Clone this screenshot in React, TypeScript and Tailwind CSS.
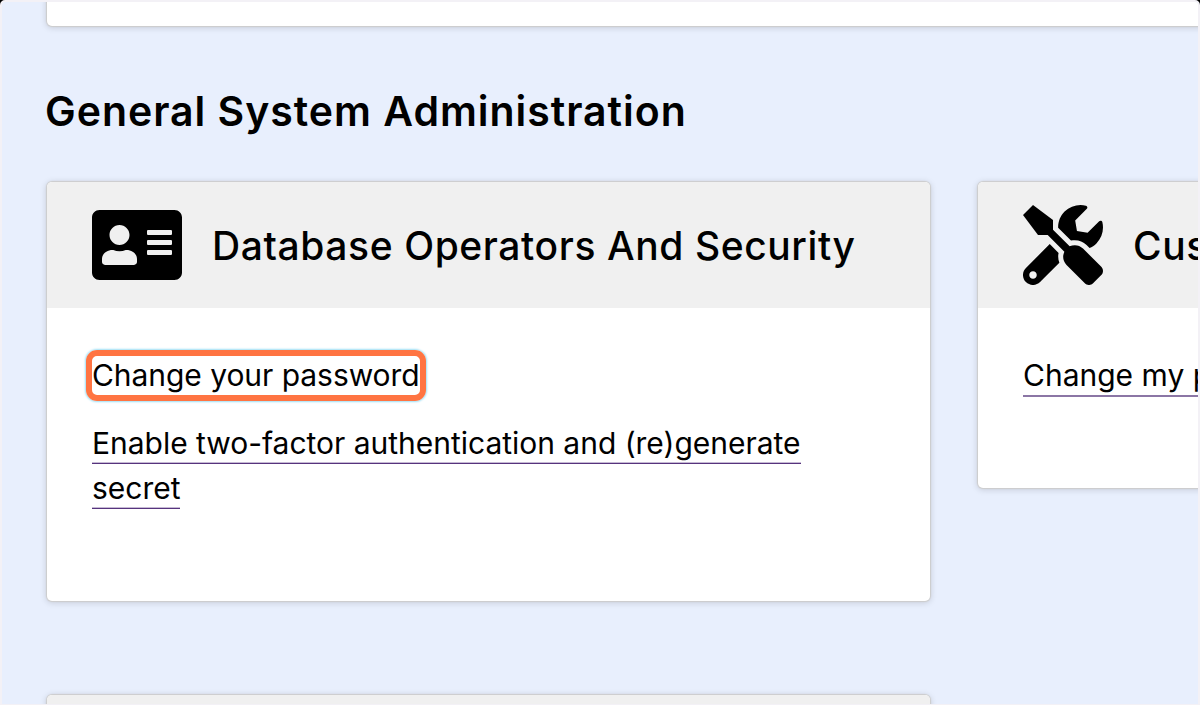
import type { ReactNode } from "react";
import { FaAddressCard, FaTools } from "react-icons/fa";

const cardClass =
  "shrink-0 overflow-hidden rounded-[5px] bg-white shadow-[0_0_1px_1px_#cdcdcd,0_1px_6px_1px_rgba(0,0,0,0.14)]";

const linkLineClass =
  "h-[43px] whitespace-nowrap border-b border-[#56337d] leading-[45px] tracking-[-0.02px] shadow-[inset_0_-1px_0_#c6bad4]";

function CardHeader({ icon, title }: { icon: ReactNode; title: string }) {
  return (
    <header className="flex h-[126px] items-center bg-[#f0f0f0] pl-[45px]">
      {icon}
      <h2 className="ml-[30px] mt-[2px] whitespace-nowrap text-[39px] font-medium leading-[48px] tracking-[0.59px]">
        {title}
      </h2>
    </header>
  );
}

export default function App() {
  return (
    <div className="h-[705px] w-[1200px] overflow-hidden bg-black font-['Inter',sans-serif] text-black">
      <main className="h-full overflow-hidden rounded-t-[5px] border-2 border-b-1 border-[#f3f1f6] bg-[#e8effd]">
        <div className="-mt-2 flex h-full w-[1300px] flex-col">
          <section className={`${cardClass} ml-[45px] h-[32px] w-[1240px]`} />
          <h1 className="ml-[43px] mt-[57px] h-[56px] shrink-0 whitespace-nowrap text-[41px] font-semibold leading-[56px] tracking-[0.97px]">
            General System Administration
          </h1>
          <div className="ml-[45px] mt-[43px] flex shrink-0 items-start gap-[48px]">
            <section className={`${cardClass} h-[419px] w-[883px]`}>
              <CardHeader
                icon={<FaAddressCard className="h-[80px] w-[90px] shrink-0" />}
                title="Database Operators And Security"
              />
              <nav className="flex flex-col pl-[45px] pt-[45px] text-[30px] leading-[45px]">
                <div className="relative h-[45px]">
                  <a className="block h-[45px] whitespace-nowrap leading-[45px] tracking-[-0.05px]">
                    Change your password
                  </a>
                  <span className="absolute -left-[6px] -top-[3px] h-[51px] w-[340px] rounded-[11px] border-[6px] border-[#ff7442] shadow-[0_0_2px_1px_#9edff5]" />
                </div>
                <a className="mt-[23px] flex flex-col items-start">
                  <span className={linkLineClass}>
                    Enable two-factor authentication and (re)generate
                  </span>
                  <span className={`${linkLineClass} mt-[2px]`}>secret</span>
                </a>
              </nav>
            </section>
            <section className={`${cardClass} h-[306px] w-[320px]`}>
              <CardHeader
                icon={<FaTools className="h-[80px] w-[80px] shrink-0" />}
                title="Cus"
              />
              <nav className="pl-[45px] pt-[45px] text-[30px]">
                <a className="block h-[44px] whitespace-nowrap border-b-2 border-[#8b76a5] leading-[44px]">
                  Change my p
                </a>
              </nav>
            </section>
          </div>
          <section className={`${cardClass} ml-[45px] mt-[94px] h-[126px] w-[883px]`}>
            <div className="h-full bg-[#f0f0f0]" />
          </section>
        </div>
      </main>
    </div>
  );
}
